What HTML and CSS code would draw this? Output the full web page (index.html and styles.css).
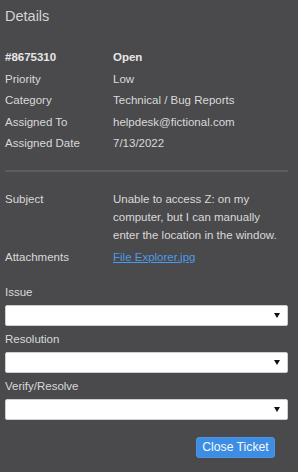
FILE: index.html
```html
<!DOCTYPE html>
<html>
<head>
<meta charset="utf-8">
<link rel="stylesheet" href="styles.css">
</head>
<body>
<div class="panel">
  <h1 class="title">Details</h1>
  <div class="grid top">
    <div class="label strong">#8675310</div><div class="value strong">Open</div>
    <div class="label">Priority</div><div class="value">Low</div>
    <div class="label">Category</div><div class="value">Technical / Bug Reports</div>
    <div class="label">Assigned To</div><div class="value">helpdesk@fictional.com</div>
    <div class="label">Assigned Date</div><div class="value">7/13/2022</div>
  </div>
  <hr class="divider">
  <div class="grid">
    <div class="label">Subject</div><div class="value">Unable to access Z: on my computer, but I can manually enter the location in the window.</div>
    <div class="label">Attachments</div><div class="value"><a class="link" href="#">File Explorer.jpg</a></div>
  </div>
  <div class="form">
    <label class="field-label">Issue</label>
    <div class="select-wrap"><select class="select"><option></option></select></div>
    <label class="field-label">Resolution</label>
    <div class="select-wrap"><select class="select"><option></option></select></div>
    <label class="field-label">Verify/Resolve</label>
    <div class="select-wrap"><select class="select"><option></option></select></div>
  </div>
  <div class="actions">
    <button class="btn">Close Ticket</button>
  </div>
</div>
</body>
</html>
```
FILE: styles.css
```css
* { box-sizing: border-box; }
html, body {
  margin: 0;
  background: #4a494c;
}
body {
  font-family: "Liberation Sans", Arial, sans-serif;
  color: #d9d9d9;
  font-size: 11.5px;
}
.panel {
  padding: 7px 11px 0 5px;
}
.title {
  margin: 0;
  font-size: 14.5px;
  font-weight: normal;
  line-height: 18px;
  color: #d4d4d4;
}
.grid {
  display: grid;
  grid-template-columns: 108px 1fr;
  row-gap: 3.5px;
  line-height: 18px;
}
.grid.top {
  margin-top: 23px;
}
.strong {
  font-weight: bold;
  color: #e6e6e6;
}
.divider {
  border: 0;
  height: 2px;
  background: #5d5c60;
  margin: 18px -1px 18px 0;
}
.link {
  color: #4b9be9;
  text-decoration: underline;
}
.form {
  display: flex;
  flex-direction: column;
  margin-top: 17px;
}
.field-label {
  line-height: 18px;
  margin-bottom: 4px;
}
.select-wrap {
  position: relative;
  margin-bottom: 4px;
  margin-right: -1px;
}
.select {
  display: block;
  width: 100%;
  height: 21px;
  -webkit-appearance: none;
  appearance: none;
  background: #ffffff;
  border: 1px solid #cfcfcf;
  border-radius: 2px;
  margin: 0;
  padding: 0 4px;
  font-family: inherit;
  font-size: 11.5px;
}
.select-wrap::after {
  content: "";
  position: absolute;
  right: 8px;
  top: 8px;
  border-left: 3px solid transparent;
  border-right: 3px solid transparent;
  border-top: 5px solid #111;
  pointer-events: none;
}
.actions {
  display: flex;
  justify-content: flex-end;
  margin-top: 13px;
  padding-right: 1px;
}
.btn {
  background: #3d8ee2;
  color: #f4f8fd;
  border: 1px solid #4a95e6;
  border-radius: 3px;
  font-family: inherit;
  font-size: 12.2px;
  height: 21px;
  width: 79px;
  padding: 0;
  line-height: 19px;
  margin-right: 11px;
}
```
